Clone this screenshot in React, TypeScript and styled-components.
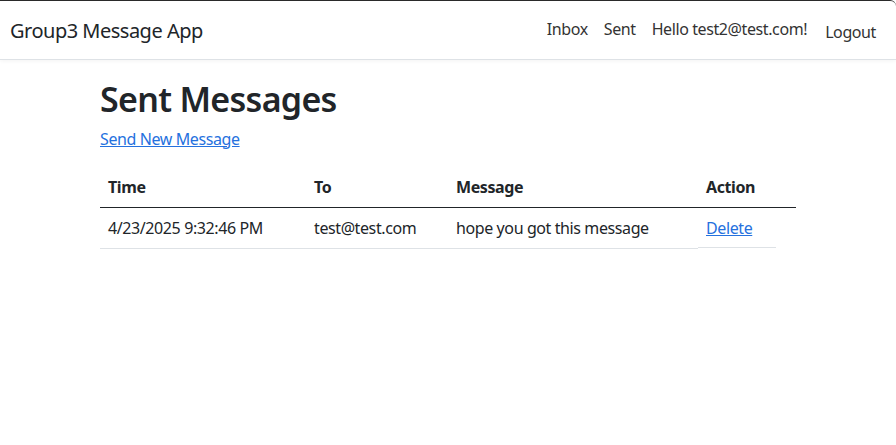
import styled, { createGlobalStyle } from "styled-components";

const GlobalStyle = createGlobalStyle`
  html, body {
    margin: 0;
    padding: 0;
    background: #fff;
  }
  body {
    font-family: "Noto Sans", "Open Sans", sans-serif;
    font-size: 16px;
    line-height: 1.5;
    letter-spacing: -0.4px;
    color: #212529;
  }
`;

const Frame = styled.div`
  min-height: 445px;
  border-top: 1px solid #2b2b2b;
  border-top-right-radius: 6px;
  box-sizing: border-box;
`;

const Navbar = styled.nav`
  height: 58px;
  display: flex;
  align-items: center;
  justify-content: space-between;
  padding: 0 12px 0 10px;
  border-bottom: 1px solid #dee2e6;
  box-shadow: 0 1px 4px rgba(0, 0, 0, 0.05);
  margin-bottom: 18px;
`;

const Brand = styled.a`
  font-size: 20px;
  letter-spacing: -0.5px;
  color: #212529;
  text-decoration: none;
  padding-top: 2px;
`;

const NavList = styled.ul`
  display: flex;
  align-items: center;
  list-style: none;
  margin: 0;
  padding: 0;
`;

interface INavItem {
  lower?: boolean;
}

const NavLink = styled.a<INavItem>`
  display: block;
  padding: 8px;
  font-size: 16px;
  color: #333;
  text-decoration: none;
  margin-top: ${(props) => (props.lower ? "4px" : "-2px")};
  margin-left: ${(props) => (props.lower ? "2px" : "0")};
`;

const Container = styled.main`
  width: 696px;
  margin: 0 auto;
`;

const Title = styled.h1`
  font-size: 34px;
  font-weight: 600;
  letter-spacing: -0.7px;
  line-height: 1.25;
  margin: 0 0 6px;
`;

const NewLink = styled.a`
  display: inline-block;
  color: #2571de;
  text-decoration: underline;
  margin-bottom: 16px;
`;

const Table = styled.table`
  width: 100%;
  table-layout: fixed;
  border-collapse: collapse;
`;

const Head = styled.thead`
  border-bottom: 1px solid #212529;
`;

interface ICell {
  w?: number;
}

const Th = styled.th<ICell>`
  text-align: left;
  font-weight: 700;
  padding: 8px;
  height: 24px;
  width: ${(props) => (props.w ? `${props.w}px` : "auto")};
`;

const Td = styled.td`
  padding: 8px;
  height: 24px;
  white-space: nowrap;
  border-bottom: 1px solid #dee2e6;
`;

const ActionTd = styled.td`
  padding: 8px;
  height: 24px;
  background: linear-gradient(#dee2e6, #dee2e6) no-repeat left bottom / 78px 1px;
`;

const DeleteLink = styled.a`
  color: #2571de;
  text-decoration: underline;
`;

const messages = [
  {
    id: 1,
    time: "4/23/2025 9:32:46 PM",
    to: "test@test.com",
    body: "hope you got this message",
  },
];

function App() {
  return (
    <>
      <GlobalStyle />
      <Frame>
        <Navbar>
          <Brand href="#">Group3 Message App</Brand>
          <NavList>
            <li>
              <NavLink href="#">Inbox</NavLink>
            </li>
            <li>
              <NavLink href="#">Sent</NavLink>
            </li>
            <li>
              <NavLink href="#">Hello test2@test.com!</NavLink>
            </li>
            <li>
              <NavLink href="#" lower>
                Logout
              </NavLink>
            </li>
          </NavList>
        </Navbar>
        <Container>
          <Title>Sent Messages</Title>
          <NewLink href="#">Send New Message</NewLink>
          <Table>
            <Head>
              <tr>
                <Th w={190}>Time</Th>
                <Th w={126}>To</Th>
                <Th w={234}>Message</Th>
                <Th>Action</Th>
              </tr>
            </Head>
            <tbody>
              {messages.map((m) => (
                <tr key={m.id}>
                  <Td>{m.time}</Td>
                  <Td>{m.to}</Td>
                  <Td>{m.body}</Td>
                  <ActionTd>
                    <DeleteLink href="#">Delete</DeleteLink>
                  </ActionTd>
                </tr>
              ))}
            </tbody>
          </Table>
        </Container>
      </Frame>
    </>
  );
}

export default App;
